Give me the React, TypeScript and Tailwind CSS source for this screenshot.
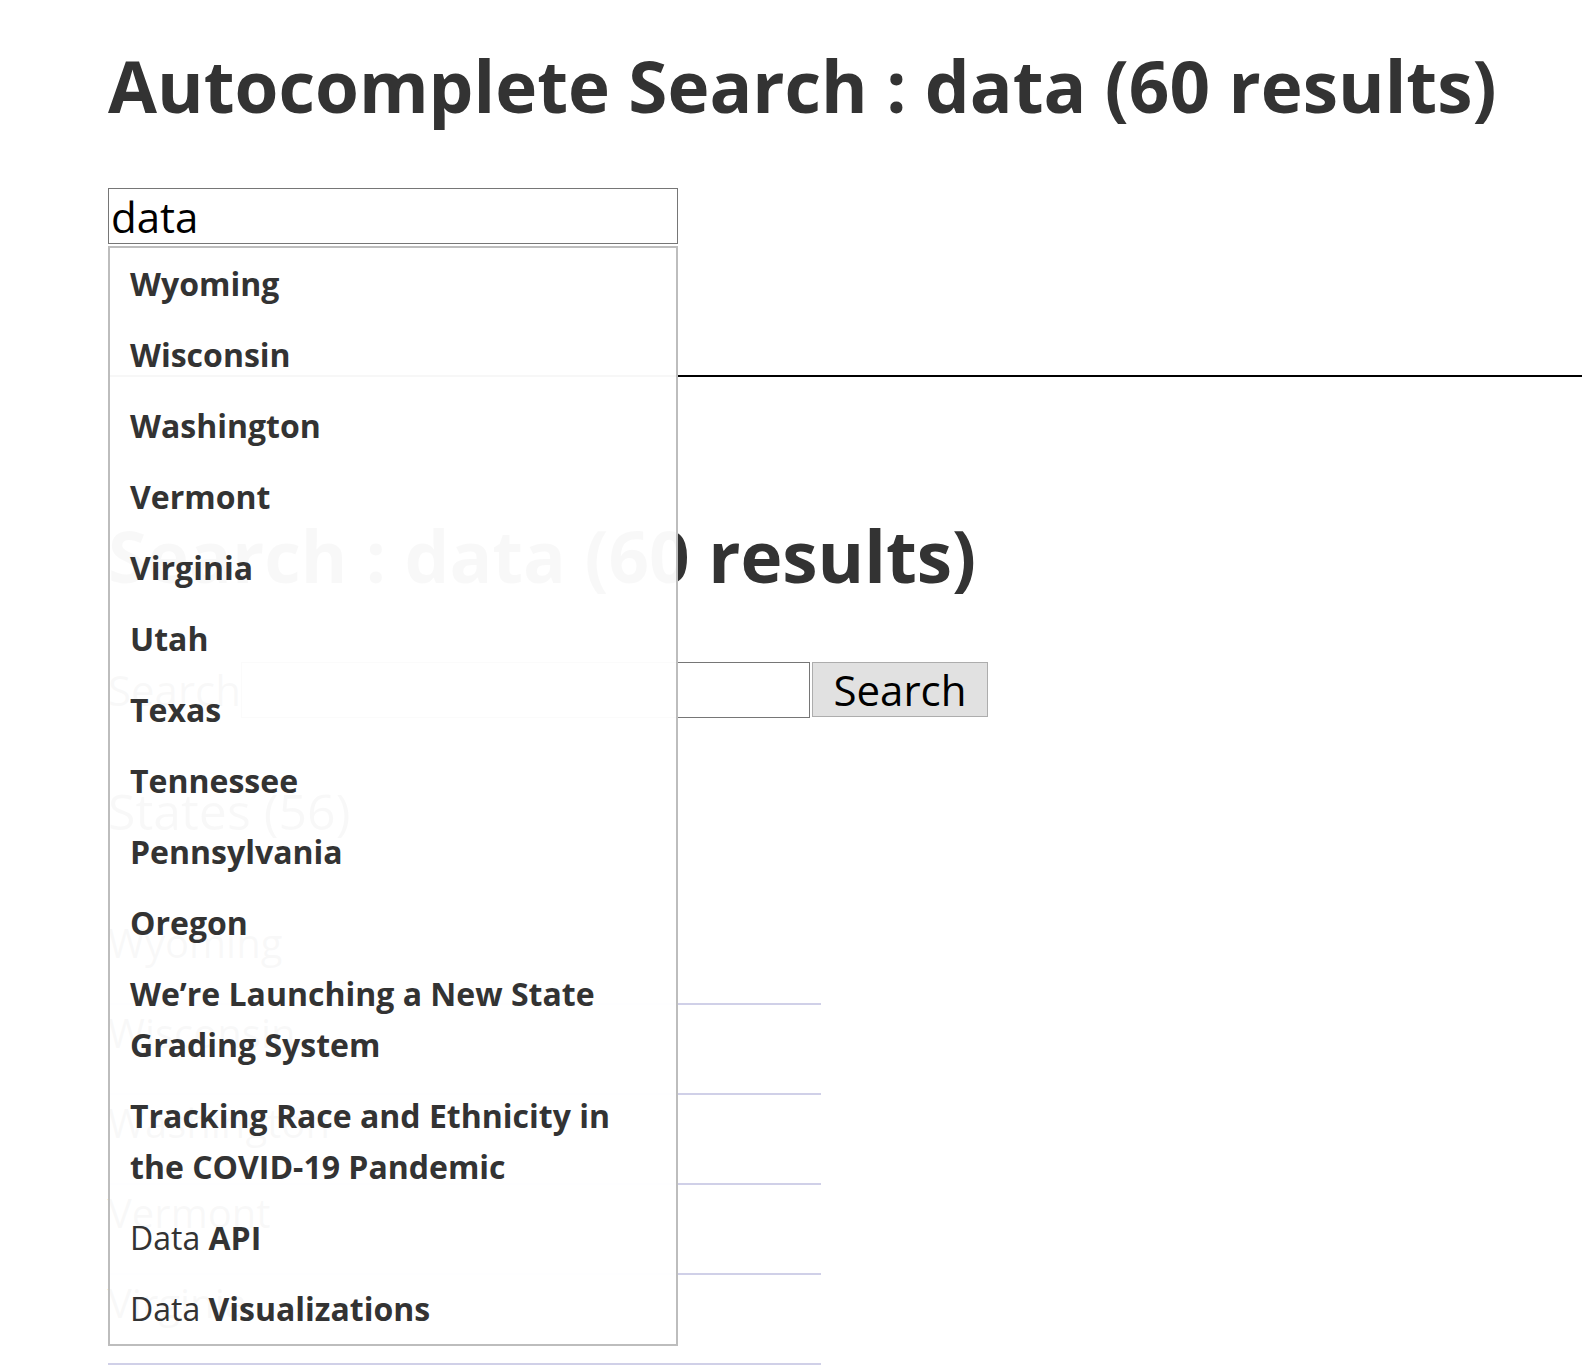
import React from 'react'

interface Suggestion {
  match?: string
  rest: string
}

const suggestions: Suggestion[] = [
  { rest: 'Wyoming' },
  { rest: 'Wisconsin' },
  { rest: 'Washington' },
  { rest: 'Vermont' },
  { rest: 'Virginia' },
  { rest: 'Utah' },
  { rest: 'Texas' },
  { rest: 'Tennessee' },
  { rest: 'Pennsylvania' },
  { rest: 'Oregon' },
  { rest: 'We\u2019re Launching a New State Grading System' },
  { rest: 'Tracking Race and Ethnicity in the COVID-19 Pandemic' },
  { match: 'Data', rest: ' API' },
  { match: 'Data', rest: ' Visualizations' }
]

const states = ['Wyoming', 'Wisconsin', 'Washington', 'Vermont', 'Virginia']

export default function App(): JSX.Element {
  return (
    <div className="relative h-[1367px] overflow-hidden bg-white font-['Open_Sans',sans-serif] text-[#333]">
      <div className="pl-[108px]">
        <h1 className="pt-[50px] text-[71px] font-bold leading-none whitespace-nowrap">
          Autocomplete Search : data (60 results)
        </h1>

        {/* autocomplete box with open suggestion list */}
        <div className="relative mt-[67px] w-[570px]">
          <input
            value="data"
            readOnly
            className="block h-[56px] w-full border border-[#767676] bg-white px-[2px] text-[42px] text-black outline-none"
          />
          <ul className="absolute left-0 top-[58px] z-10 w-full border-2 border-[#bdbdbd] bg-white/[0.97]">
            {suggestions.map((s, i) => (
              <li key={i} className="px-[20px] py-[10px] text-[32px] leading-[51px]">
                {s.match && <span className="font-normal">{s.match}</span>}
                <span className="font-bold">{s.rest}</span>
              </li>
            ))}
          </ul>
        </div>

        <hr className="mt-[131px] h-[2px] border-0 bg-black" />

        <main>
          <h1 className="mt-[143px] text-[71px] font-bold leading-none whitespace-nowrap">
            Search : data (60 results)
          </h1>

          <form className="mt-[67px] flex items-center" onSubmit={(e) => e.preventDefault()}>
            <label className="text-[42px]">Search</label>
            <input className="h-[56px] w-[569px] border border-[#767676] bg-white outline-none" />
            <button
              type="submit"
              className="ml-[2px] h-[55px] w-[176px] border border-[#adadad] bg-[#e1e1e1] text-[42px] leading-none text-black"
            >
              Search
            </button>
          </form>

          <h2 className="mt-[65px] text-[50px] leading-none">States (56)</h2>

          <ul className="mt-[79px] w-[713px]">
            {states.map((name) => (
              <li key={name} className="h-[90px] border-b-2 border-[#d0d0e8] text-[40px] leading-[56px]">
                {name}
              </li>
            ))}
          </ul>
        </main>
      </div>
    </div>
  )
}
